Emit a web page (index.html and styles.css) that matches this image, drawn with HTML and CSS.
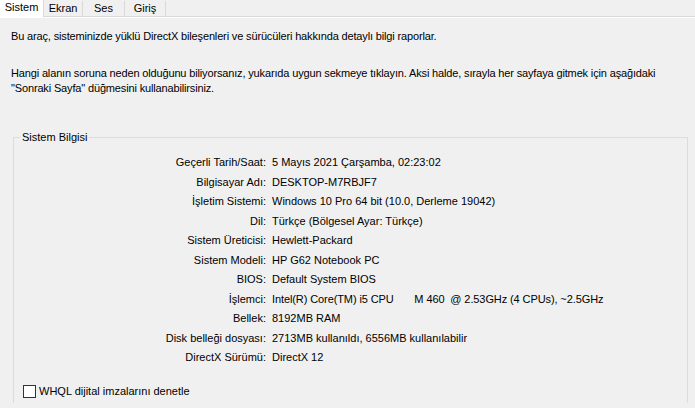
FILE: index.html
```html
<!DOCTYPE html>
<html lang="tr">
<head>
    <meta charset="UTF-8">
    <title>DirectX Tanı Aracı</title>
    <link rel="stylesheet" href="styles.css">
</head>
<body>
    <div class="tabs">
        <div class="tab active">Sistem</div>
        <div class="tab ekran">Ekran</div>
        <div class="tab ses">Ses</div>
        <div class="tab giris">Giriş</div>
    </div>
    <div class="panel">
        <p class="intro">Bu araç, sisteminizde yüklü DirectX bileşenleri ve sürücüleri hakkında detaylı bilgi raporlar.</p>
        <p class="hint">Hangi alanın soruna neden olduğunu biliyorsanız, yukarıda uygun sekmeye tıklayın. Aksi halde, sırayla her sayfaya gitmek için aşağıdaki<br>"Sonraki Sayfa" düğmesini kullanabilirsiniz.</p>

        <fieldset class="group">
            <legend>Sistem Bilgisi</legend>
            <div class="info">
                <span class="label">Geçerli Tarih/Saat:</span><span>5 Mayıs 2021 Çarşamba, 02:23:02</span>
                <span class="label">Bilgisayar Adı:</span><span>DESKTOP-M7RBJF7</span>
                <span class="label">İşletim Sistemi:</span><span>Windows 10 Pro 64 bit (10.0, Derleme 19042)</span>
                <span class="label">Dil:</span><span>Türkçe (Bölgesel Ayar: Türkçe)</span>
                <span class="label">Sistem Üreticisi:</span><span>Hewlett-Packard</span>
                <span class="label">Sistem Modeli:</span><span>HP G62 Notebook PC</span>
                <span class="label">BIOS:</span><span>Default System BIOS</span>
                <span class="label">İşlemci:</span><span class="pre">Intel(R) Core(TM) i5 CPU       M 460  @ 2.53GHz (4 CPUs), ~2.5GHz</span>
                <span class="label">Bellek:</span><span>8192MB RAM</span>
                <span class="label">Disk belleği dosyası:</span><span>2713MB kullanıldı, 6556MB kullanılabilir</span>
                <span class="label">DirectX Sürümü:</span><span>DirectX 12</span>
            </div>
            <label class="check"><span class="box"></span>WHQL dijital imzalarını denetle</label>
        </fieldset>
    </div>
</body>
</html>
```

FILE: styles.css
```css
html, body {
    margin: 0;
    background-color: #f0f0f0;
    overflow: hidden;
}
body {
    font-family: "Liberation Sans", Arial, sans-serif;
    font-size: 11px;
    color: #000;
    height: 408px;
}
.tabs {
    display: flex;
    height: 16px;
    border-bottom: 1px solid #d9d9d9;
}
.tab {
    box-sizing: border-box;
    text-align: center;
    line-height: 15px;
    margin-top: 1px;
    border-right: 1px solid #d9d9d9;
}
.tab.active {
    background: #fff;
    margin-top: 0;
    margin-bottom: -1px;
    width: 44px;
    line-height: 14px;
}
.tab.ekran { width: 39px; }
.tab.ses { width: 42px; }
.tab.giris { width: 41px; }
.panel {
    border-top: 1px solid #fff;
    padding: 0 7px 0 13px;
}
p {
    margin: 0;
    line-height: 15px;
    letter-spacing: -0.15px;
}
.intro {
    margin-top: 11px;
    margin-left: -2px;
}
.hint {
    margin-top: 22px;
    margin-left: -2px;
}
.group {
    margin: 34px 0 0 0;
    padding: 0;
    border: 1px solid #dcdcdc;
    border-bottom: none;
    height: 272px;
}
.group legend {
    margin-left: 6px;
    padding: 0 2px;
    line-height: 15px;
}
.info {
    display: grid;
    grid-template-columns: 252px 1fr;
    column-gap: 6px;
    line-height: 19.5px;
    margin-top: 8px;
}
.label {
    text-align: right;
}
.pre {
    white-space: pre;
    letter-spacing: -0.1px;
}
.check {
    display: flex;
    align-items: center;
    margin: 16px 0 0 9px;
    line-height: 15px;
}
.box {
    width: 11px;
    height: 11px;
    border: 1px solid #333;
    background: #fff;
    margin-right: 3px;
}
```
